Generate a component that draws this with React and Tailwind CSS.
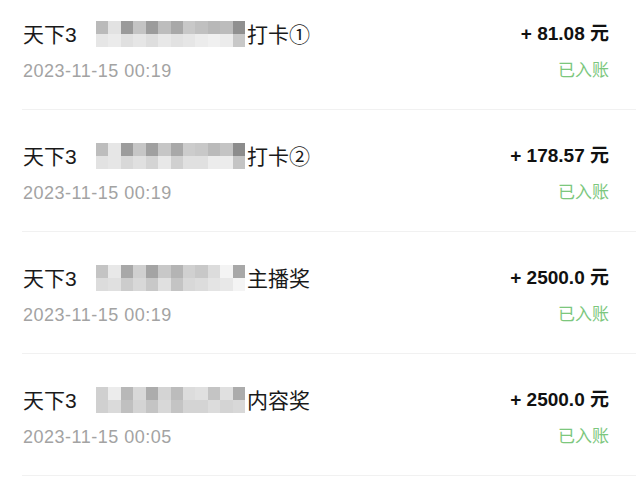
import React from "react";

const rows = [
  {
    tail: "打卡①",
    amount: "+ 81.08 元",
    time: "2023-11-15 00:19",
    top: ["bg-[#bababa]", "bg-[#e2e2e2]", "bg-[#9a9a9a]", "bg-[#c4c4c4]", "bg-[#9c9c9c]", "bg-[#bdbdbd]", "bg-[#a8a8a8]", "bg-[#c8c8c8]", "bg-[#c0c0c0]", "bg-[#b8b8b8]", "bg-[#bcbcbc]", "bg-[#909090]"],
    bottom: ["bg-[#e6e6e6]", "bg-[#ebebeb]", "bg-[#e0e0e0]", "bg-[#e6e6e6]", "bg-[#dedede]", "bg-[#e8e8e8]", "bg-[#e2e2e2]", "bg-[#e6e6e6]", "bg-[#ececec]", "bg-[#f0f0f0]", "bg-[#ececec]", "bg-[#c8c8c8]"],
  },
  {
    tail: "打卡②",
    amount: "+ 178.57 元",
    time: "2023-11-15 00:19",
    top: ["bg-[#bdbdbd]", "bg-[#e6e6e6]", "bg-[#9c9c9c]", "bg-[#c6c6c6]", "bg-[#a0a0a0]", "bg-[#c6c6c6]", "bg-[#a8a8a8]", "bg-[#cccccc]", "bg-[#c8c8c8]", "bg-[#bababa]", "bg-[#c4c4c4]", "bg-[#8c8c8c]"],
    bottom: ["bg-[#e2e2e2]", "bg-[#e6e6e6]", "bg-[#d8d8d8]", "bg-[#e0e0e0]", "bg-[#d4d4d4]", "bg-[#e8e8e8]", "bg-[#d0d0d0]", "bg-[#e0e0e0]", "bg-[#e0e0e0]", "bg-[#ececec]", "bg-[#ececec]", "bg-[#c4c4c4]"],
  },
  {
    tail: "主播奖",
    amount: "+ 2500.0 元",
    time: "2023-11-15 00:19",
    top: ["bg-[#c4c4c4]", "bg-[#e8e8e8]", "bg-[#a8a8a8]", "bg-[#d0d0d0]", "bg-[#a4a4a4]", "bg-[#c8c8c8]", "bg-[#b4b4b4]", "bg-[#d0d0d0]", "bg-[#c8c8c8]", "bg-[#dcdcdc]", "bg-[#f4f4f4]", "bg-[#a8a8a8]"],
    bottom: ["bg-[#dcdcdc]", "bg-[#e0e0e0]", "bg-[#cccccc]", "bg-[#d8d8d8]", "bg-[#c8c8c8]", "bg-[#e0e0e0]", "bg-[#c4c4c4]", "bg-[#d8d8d8]", "bg-[#dcdcdc]", "bg-[#e4e4e4]", "bg-[#e8e8e8]", "bg-[#f4f4f4]"],
  },
  {
    tail: "内容奖",
    amount: "+ 2500.0 元",
    time: "2023-11-15 00:05",
    top: ["bg-[#d0d0d0]", "bg-[#ececec]", "bg-[#b8b8b8]", "bg-[#d8d8d8]", "bg-[#acacac]", "bg-[#d4d4d4]", "bg-[#bcbcbc]", "bg-[#dcdcdc]", "bg-[#e0e0e0]", "bg-[#c4c4c4]", "bg-[#e0e0e0]", "bg-[#acacac]"],
    bottom: ["bg-[#d0d0d0]", "bg-[#dadada]", "bg-[#c0c0c0]", "bg-[#d4d4d4]", "bg-[#c4c4c4]", "bg-[#d8d8d8]", "bg-[#c4c4c4]", "bg-[#d4d4d4]", "bg-[#d4d4d4]", "bg-[#dcdcdc]", "bg-[#d4d4d4]", "bg-[#d8d8d8]"],
  },
];

const font = { fontFamily: '"Liberation Sans", "Noto Sans CJK SC", sans-serif' };

function Mosaic({ top, bottom }) {
   return (
      <div className="w-[149px] h-[26px] grid grid-cols-12 grid-rows-2 shrink-0">
         {top.map((c, i) => (
            <div key={"t" + i} className={c} />
         ))}
         {bottom.map((c, i) => (
            <div key={"b" + i} className={c} />
         ))}
      </div>
   );
}

export default function App() {
   return (
      <div className="w-[636px] h-[479px] bg-white overflow-hidden" style={font}>
         <div className="-mt-[12px]">
            {rows.map((r, i) => (
               <div key={i} className="ml-[22px] pl-[1px] pr-[27px] pt-[34px] pb-[27px] border-b border-[#f1f1f1] flex justify-between">

                  {/* left: title + time */}
                  <div className="flex flex-col gap-[14px]">
                     <div className="flex items-center h-[24px] text-[21px] text-[#1a1a1a] leading-none">
                        <span className="w-[73px] shrink-0">天下3</span>
                        <Mosaic top={r.top} bottom={r.bottom} />
                        <span className="ml-[2px]">{r.tail}</span>
                     </div>
                     <div className="h-[22px] flex items-center text-[18px] tracking-[0.5px] text-[#a3a3a3]">
                        {r.time}
                     </div>
                  </div>

                  {/* right: amount + status */}
                  <div className="flex flex-col items-end gap-[14px]">
                     <div className="h-[24px] flex items-center text-[19px] font-bold text-[#111]">
                        {r.amount}
                     </div>
                     <div className="h-[22px] flex items-center text-[17px] text-[#7cc77d]">
                        已入账
                     </div>
                  </div>

               </div>
            ))}
         </div>
      </div>
   );
}
